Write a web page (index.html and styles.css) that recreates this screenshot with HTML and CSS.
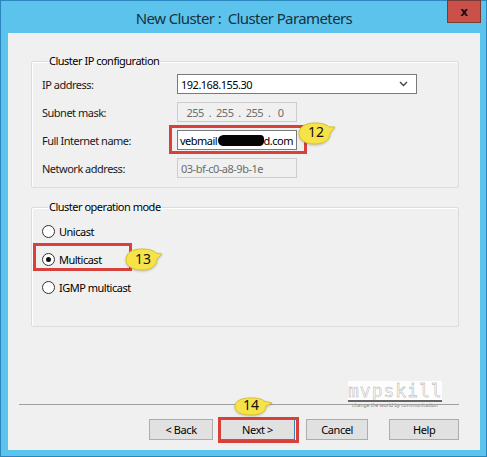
FILE: index.html
```html
<!DOCTYPE html>
<html lang="en">
<head>
  <meta charset="UTF-8">
  <title>New Cluster : Cluster Parameters</title>
  <link rel="stylesheet" href="styles.css">
</head>
<body>
  <div class="window">
    <div class="titlebar">
      <span class="title">New Cluster :&nbsp; Cluster Parameters</span>
      <button class="close">x</button>
    </div>

    <div class="client">
      <fieldset class="group ip-group">
        <legend>Cluster IP configuration</legend>
        <div class="row">
          <label>IP address:</label>
          <div class="field combo">
            <span>192.168.155.30</span>
            <svg class="chevron" width="9" height="6" viewBox="0 0 9 6"><path d="M1 1 L4.5 4.5 L8 1" fill="none" stroke="#444" stroke-width="1.4"/></svg>
          </div>
        </div>
        <div class="row">
          <label>Subnet mask:</label>
          <div class="field small disabled mask">
            <span>255</span><span>.</span><span>255</span><span>.</span><span>255</span><span>.</span><span>&nbsp;0</span>
          </div>
        </div>
        <div class="row">
          <label>Full Internet name:</label>
          <div class="highlight-wrap">
            <div class="field small name">vebmail<span class="redact"></span>d.com</div>
            <span class="mark mark-name"></span>
            <svg class="callout callout-12" width="40" height="24" viewBox="0 0 40 24">
              <path d="M18 1 C26 1 30 3 32 5 L38 5 L33 11 C33 18 27 22 18 22 C8 22 2 18 2 11.5 C2 5 8 1 18 1 Z" fill="#f6e34a" stroke="#d8c02c" stroke-width="1"/>
            </svg>
            <span class="callout-num num-12">12</span>
          </div>
        </div>
        <div class="row">
          <label>Network address:</label>
          <div class="field small disabled">03-bf-c0-a8-9b-1e</div>
        </div>
      </fieldset>

      <fieldset class="group mode-group">
        <legend>Cluster operation mode</legend>
        <div class="radio-row"><span class="radio"></span>Unicast</div>
        <div class="radio-row highlight-wrap">
          <span class="radio checked"></span>Multicast
          <span class="mark mark-multi"></span>
          <svg class="callout callout-13" width="40" height="24" viewBox="0 0 40 24">
            <path d="M18 1 C26 1 30 3 32 5 L38 6 L33 11 C33 18 27 22 18 22 C8 22 2 18 2 11.5 C2 5 8 1 18 1 Z" fill="#f6e34a" stroke="#d8c02c" stroke-width="1"/>
          </svg>
          <span class="callout-num num-13">13</span>
        </div>
        <div class="radio-row"><span class="radio"></span>IGMP multicast</div>
      </fieldset>

      <div class="watermark">
        <span class="wm-logo">mvpskill</span>
        <span class="wm-tag">change the world by communication</span>
      </div>

      <hr class="separator">

      <div class="buttons">
        <button class="btn btn-back">&lt; Back</button>
        <div class="highlight-wrap">
          <button class="btn btn-next">Next &gt;</button>
          <span class="mark mark-next"></span>
          <svg class="callout callout-14" width="42" height="20" viewBox="0 0 42 20">
            <path d="M18 1 C25 1 29 2 31 4 L39 6 L33 9 C33 15 27 18 18 18 C8 18 2 15 2 9.5 C2 4 8 1 18 1 Z" fill="#f6e34a" stroke="#d8c02c" stroke-width="1"/>
          </svg>
          <span class="callout-num num-14">14</span>
        </div>
        <button class="btn btn-cancel">Cancel</button>
        <button class="btn btn-help">Help</button>
      </div>
    </div>
  </div>
</body>
</html>
```

FILE: styles.css
```css
* {
  box-sizing: border-box;
}
body {
  margin: 0;
  font-family: "Noto Sans", "DejaVu Sans", sans-serif;
  font-size: 11px;
  letter-spacing: -0.5px;
  color: #000;
}
.window {
  position: relative;
  width: 487px;
  height: 457px;
  background: #5cc4ec;
  border: 1px solid #2b86bd;
  padding: 0 6px 6px 7px;
  display: flex;
  flex-direction: column;
}
.titlebar {
  height: 32px;
  display: flex;
  align-items: center;
  justify-content: center;
}
.title {
  font-size: 15px;
  letter-spacing: -0.6px;
  color: #17303f;
  margin-top: 1px;
}
.close {
  position: absolute;
  top: -1px;
  right: 5px;
  width: 34px;
  height: 23px;
  background: #c9514a;
  border: 1px solid #7c3a36;
  color: #111;
  font-family: "DejaVu Sans", sans-serif;
  font-weight: bold;
  font-size: 12px;
  line-height: 18px;
  padding: 0;
}
.client {
  flex: 1;
  background: #f0f0f0;
  display: flex;
  flex-direction: column;
  padding: 0 21px 10px 23px;
  position: relative;
}

/* group boxes */
.group {
  border: 1px solid #dcdcdc;
  box-shadow: inset 1px 1px 0 #fff;
  border-radius: 2px;
  margin: 0;
  padding: 0 10px;
  min-width: 0;
}
.group legend {
  margin-left: 6px;
  padding: 0 1px;
  line-height: 16px;
}
.ip-group {
  margin-top: 20px;
  padding-top: 5px;
  padding-bottom: 9px;
  display: flex;
  flex-direction: column;
  gap: 8px;
}
.mode-group {
  margin-top: 11px;
  padding-top: 6px;
  padding-bottom: 29px;
  display: flex;
  flex-direction: column;
  gap: 8px;
}
.row {
  display: flex;
  align-items: center;
  height: 20px;
}
.row label {
  width: 135px;
  color: #1a1a1a;
}
.field {
  height: 20px;
  border: 1px solid #7a7a7a;
  background: #fff;
  padding: 0 3px;
  display: flex;
  align-items: center;
  white-space: nowrap;
}
.combo {
  width: 240px;
  justify-content: space-between;
}
.chevron {
  margin-right: 5px;
}
.small {
  width: 120px;
}
.disabled {
  background: #f0f0f0;
  border-color: #cccccc;
  color: #6d6d6d;
}
.mask {
  justify-content: space-around;
  padding: 0 10px 0 6px;
}
.name {
  overflow: hidden;
  padding-left: 2px;
}
.redact {
  display: inline-block;
  width: 52px;
  height: 11px;
  background: #050505;
  border-radius: 6px 4px 5px 6px;
  margin: 1px 0 0 1px;
}

/* annotation marks */
.highlight-wrap {
  position: relative;
}
.mark {
  position: absolute;
  border: 3px solid #d8403c;
  pointer-events: none;
}
.mark-name {
  left: -8px;
  top: -5px;
  width: 138px;
  height: 29px;
}
.mark-multi {
  left: -9px;
  top: -6px;
  width: 99px;
  height: 28px;
}
.mark-next {
  left: -2px;
  top: -2px;
  width: 81px;
  height: 26px;
}
.callout {
  position: absolute;
  filter: drop-shadow(0 1px 1px rgba(0, 0, 0, 0.2));
}
.callout-num {
  position: absolute;
  font-size: 14px;
  letter-spacing: 0;
  line-height: 16px;
  color: #111;
}
.callout-12 {
  left: 120px;
  top: -8px;
}
.num-12 {
  left: 131px;
  top: -6px;
}
.callout-13 {
  left: 82px;
  top: -1px;
}
.num-13 {
  left: 93px;
  top: 2px;
}
.callout-14 {
  left: 13px;
  top: -22px;
}
.num-14 {
  left: 23px;
  top: -22px;
}

/* radios */
.radio-row {
  display: flex;
  align-items: center;
  height: 20px;
}
.radio {
  width: 13px;
  height: 13px;
  border: 1px solid #333;
  border-radius: 50%;
  background: #fff;
  margin-right: 4px;
  display: flex;
  align-items: center;
  justify-content: center;
}
.radio.checked::after {
  content: "";
  width: 5px;
  height: 5px;
  border-radius: 50%;
  background: #111;
}

/* watermark */
.watermark {
  margin-top: auto;
  align-self: flex-end;
  margin-right: 17px;
  width: 94px;
  display: flex;
  flex-direction: column;
  align-items: center;
}
.wm-logo {
  font-family: "DejaVu Sans Mono", monospace;
  font-size: 18px;
  line-height: 19px;
  letter-spacing: 1px;
  color: #fbfbfb;
  background: #fdfdfd;
  -webkit-text-stroke: 0.4px #a5a5a5;
  width: 100%;
  text-align: center;
}
.wm-tag {
  font-size: 5px;
  letter-spacing: 0;
  line-height: 6px;
  color: #777;
  border-top: 2px solid #666;
  width: 100%;
  text-align: center;
  white-space: nowrap;
  overflow: hidden;
}
.separator {
  border: 0;
  border-top: 1px solid #a0a0a0;
  margin: -4px 0 14px -12px;
}

/* buttons */
.buttons {
  display: flex;
  align-items: center;
  padding-left: 118px;
}
.btn {
  height: 21px;
  font-family: inherit;
  font-size: 11px;
  letter-spacing: -0.4px;
  background: #e1e1e1;
  border: 1px solid #adadad;
  color: #000;
  padding: 0;
}
.btn-back {
  width: 67px;
  margin-right: 7px;
}
.btn-next {
  width: 75px;
  border-color: #3c7fb1;
  display: block;
}
.btn-cancel {
  width: 65px;
  margin-left: 11px;
}
.btn-help {
  width: 73px;
  margin-left: 21px;
}
```
